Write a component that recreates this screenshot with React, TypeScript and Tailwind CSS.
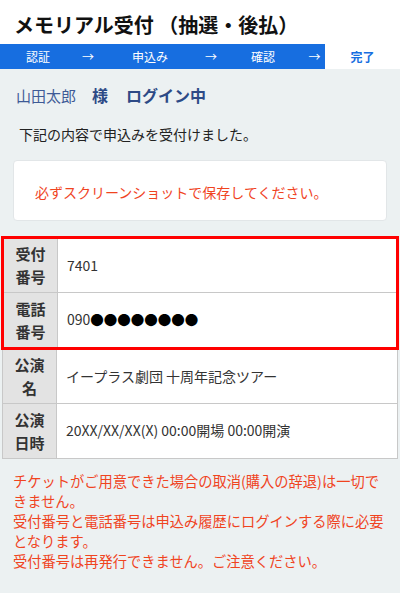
import React from "react";

const font = { fontFamily: '"Noto Sans CJK JP", "Noto Sans", sans-serif' };

function Row({ label, value, last }: { label: string[]; value: React.ReactNode; last?: boolean }) {
  return (
    <div className={`flex h-[54px] bg-white ${last ? "" : "border-b border-[#c8c8c8]"}`}>
      <div className="flex w-[54px] shrink-0 flex-col items-center justify-center border-r border-[#c8c8c8] bg-[#e3e3e3] text-[15px] font-bold leading-[23px] text-[#333]">
        {label.map((l) => (
          <span key={l}>{l}</span>
        ))}
      </div>
      <div className="flex items-center pl-[9px] text-[14px] text-[#333]">{value}</div>
    </div>
  );
}

export default function App() {
  const steps = [
    { text: "認証", w: "w-[76px]" },
    { text: "→", w: "w-[24px]" },
    { text: "申込み", w: "w-[100px]" },
    { text: "→", w: "w-[22px]" },
    { text: "確認", w: "w-[82px]" },
    { text: "→", w: "w-[21px]" },
  ];

  return (
    <div className="min-h-[593px] w-[400px] bg-[#ecf1f2]" style={font}>
      {/* Header */}
      <div className="bg-white">
        <h1 className="pl-[14px] pt-[11px] pb-[5px] text-[20px] font-bold leading-[28px] text-[#111]">
          メモリアル受付 （抽選・後払）
        </h1>
        <div className="flex h-[25px] items-center text-[12px]">
          <div className="flex h-full w-[325px] items-center bg-[#176ee0] text-white">
            {steps.map((s, i) => (
              <span key={i} className={`${s.w} text-center`}>
                {s.text}
              </span>
            ))}
          </div>
          <span className="w-[75px] text-center font-bold text-[#176ee0]">完了</span>
        </div>
      </div>

      {/* Login line */}
      <div className="flex items-baseline pl-[16px] pt-[14px] text-[#2d4a86]">
        <span className="text-[15px] text-[#3e5a96]">山田太郎</span>
        <span className="ml-[16px] text-[16px] font-bold">様</span>
        <span className="ml-[18px] text-[16px] font-bold">ログイン中</span>
      </div>

      <p className="pl-[19px] pt-[16px] text-[14px] text-[#222]">下記の内容で申込みを受付けました。</p>

      <div className="mx-[13px] mt-[15px] flex h-[61px] items-center rounded-[4px] border border-[#e2e6e8] bg-white pl-[21px] pt-[5px] text-[14px] text-[#f0441f]">
        必ずスクリーンショットで保存してください。
      </div>

      {/* Table */}
      <div className="mt-[15px] px-[1px]">
        <div className="border-[3px] border-[#ff0000]">
          <Row label={["受付", "番号"]} value="7401" />
          <Row
            label={["電話", "番号"]}
            value={
              <span>
                090<span className="text-[13.5px] text-black">●●●●●●●●</span>
              </span>
            }
            last
          />
        </div>
        <div className="mx-[1px] border-x border-b border-[#c8c8c8]">
          <Row label={["公演", "名"]} value="イープラス劇団 十周年記念ツアー" />
          <Row label={["公演", "日時"]} value="20XX/XX/XX(X) 00:00開場 00:00開演" last />
        </div>
      </div>

      <div className="whitespace-nowrap pl-[13px] pt-[12px] text-[14.25px] leading-[20px] text-[#f0441f]">
        <p>
          チケットがご用意できた場合の取消(購入の辞退)は一切で
          <br />
          きません。
        </p>
        <p>
          受付番号と電話番号は申込み履歴にログインする際に必要
          <br />
          となります。
        </p>
        <p>受付番号は再発行できません。ご注意ください。</p>
      </div>
    </div>
  );
}
